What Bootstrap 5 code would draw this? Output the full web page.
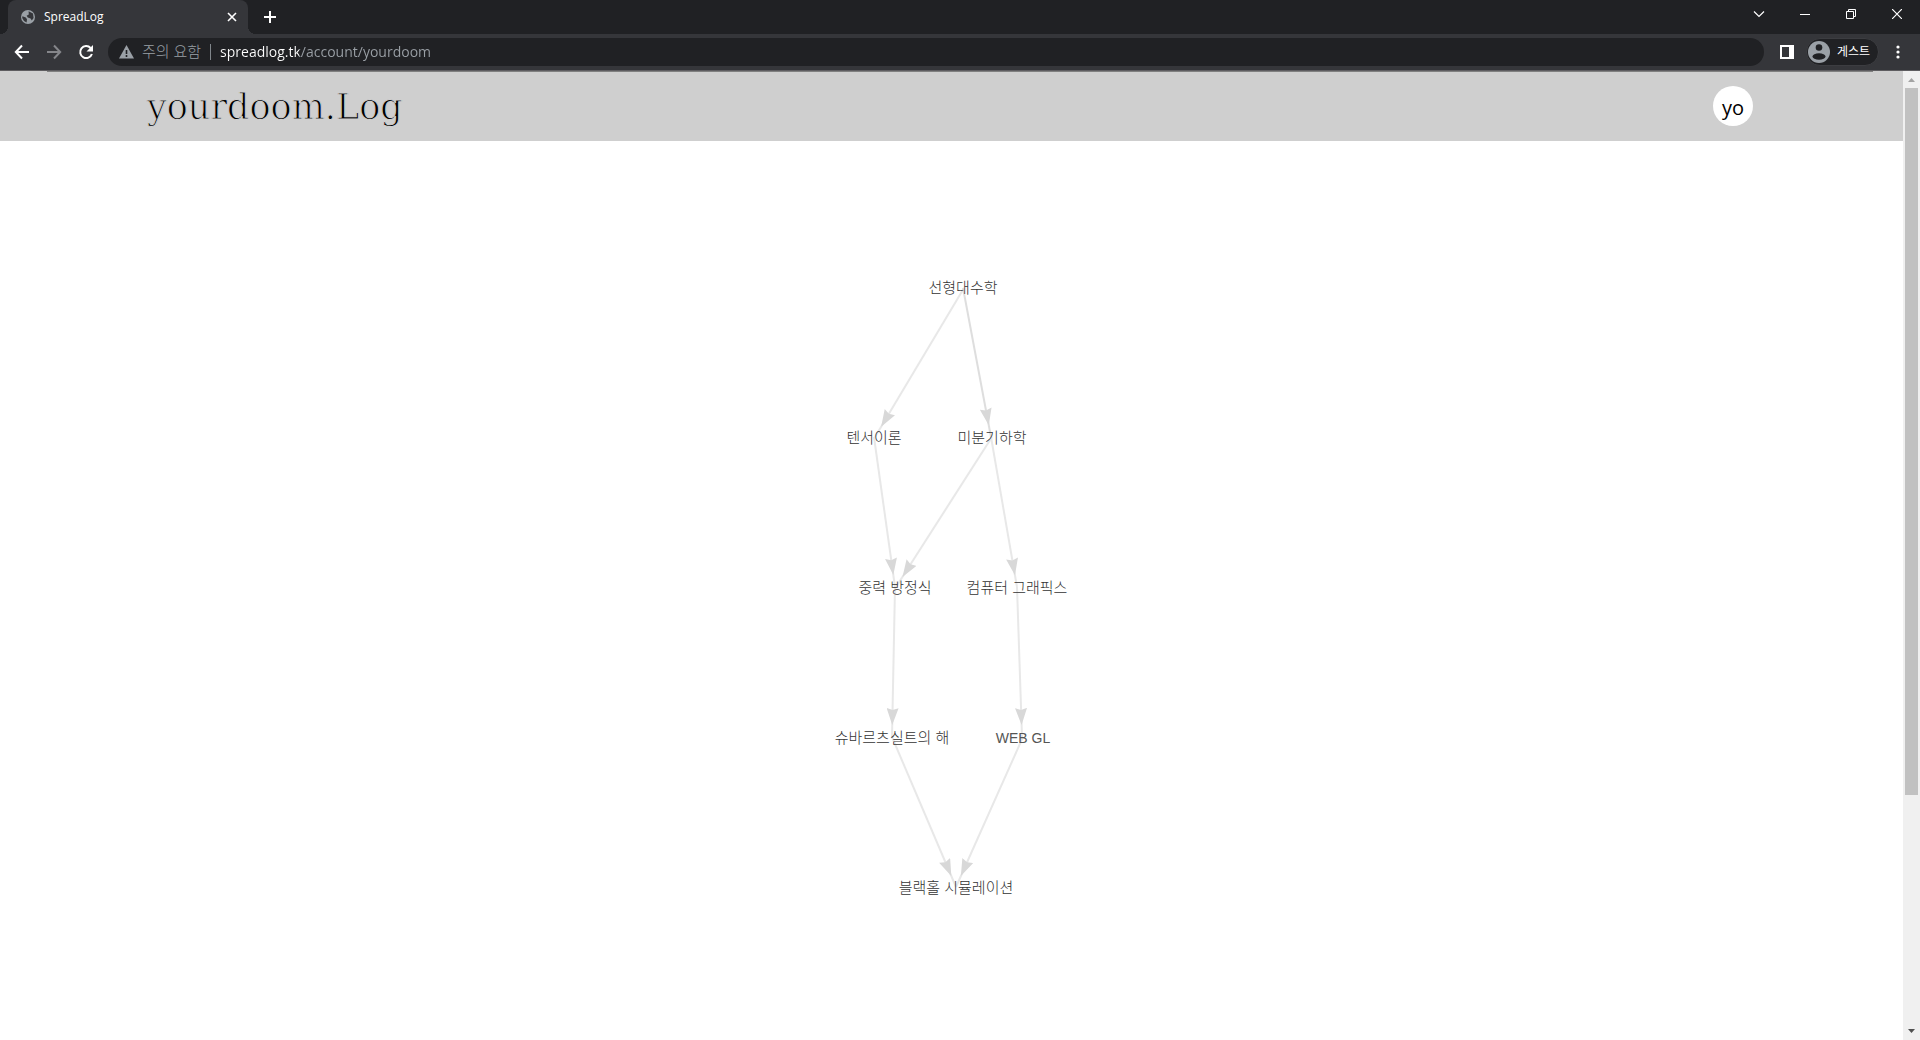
<!DOCTYPE html>
<html lang="ko">
<head>
<meta charset="utf-8">
<meta name="viewport" content="width=device-width, initial-scale=1">
<title>SpreadLog</title>
<link rel="stylesheet" href="https://cdn.jsdelivr.net/npm/bootstrap@5.3.0/dist/css/bootstrap.min.css">
<style>
  body { font-family: "Open Sans", "Noto Sans CJK KR", sans-serif; }
  button { background: none; border: 0; padding: 0; color: #fff; }
  svg { display: block; flex: none; }
  .tab-strip { height: 34px; background: #202124; padding-left: 8px; }
  .site-tab { width: 240px; background: #35363a; border-radius: 8px 8px 0 0; color: #fff; font-size: 12px; padding: 0 11px 0 12px; position: relative; }
  .site-tab::before, .site-tab::after { content: ""; position: absolute; bottom: 0; width: 8px; height: 8px; }
  .site-tab::before { left: -8px; background: radial-gradient(circle at 0 0, transparent 8px, #35363a 8px); }
  .site-tab::after { right: -8px; background: radial-gradient(circle at 100% 0, transparent 8px, #35363a 8px); }
  .site-tab a { color: #fff; text-decoration: none; }
  .caption-btn { width: 46px; height: 28px; display: grid; place-items: center; }
  .tool-bar { height: 36px; background: #35363a; padding: 0 20px 0 14px; }
  .nav-btns { gap: 16px; padding-right: 14px; }
  .omnibox { height: 28px; border-radius: 14px; background: #202124; padding: 0 11px; }
  .warn-label { color: #9aa0a6; font-size: 15px; font-weight: 300; line-height: 20px; margin-left: 8px; padding-bottom: 2px; }
  .divider { width: 1px; height: 16px; background: #80868b; margin: 0 9px; }
  .url-input { border: 0; outline: 0; padding: 0 0 2px; font-size: 14px; height: 24px; color: transparent; background: linear-gradient(90deg, #fff 79px, #9aa0a6 79px); -webkit-background-clip: text; background-clip: text; }
  .guest-btn { height: 28px; border-radius: 14px; background: #202124; border: 1px solid #3c3d41; font-size: 12px; padding: 0 8px 0 1px; gap: 7px; margin: 0 17px 0 12px; }
  .seam { height: 1px; background: #5e5d60; }
  .log-header { height: 70px; background: #cfcfcf; padding: 0 150px 0 147px; position: relative; }
  .log-header::before { content: ""; position: absolute; top: 0; left: 47px; right: 30px; height: 1px; background: #808080; }
  .log-title { font-family: "DejaVu Serif", serif; font-size: 35px; line-height: 40px; padding-top: 2px; color: #000; text-decoration: none; -webkit-text-stroke: 1px #cfcfcf; }
  .user-chip { width: 40px; height: 40px; border-radius: 50%; background: #fff; color: #000; font-size: 20px; line-height: 40px; padding-top: 2px; }
  .graph-area { padding-top: 129px; }
  .hangul { font: 300 15px "Liberation Sans", "Noto Sans CJK KR", sans-serif; }
  .latin { font: 14px "Liberation Sans", sans-serif; }
  .scroll-rail { width: 17px; background: #f0f0f0; }
  .scroll-thumb { width: 13px; height: 73%; background: #c1c1c1; }
  .rail-arrow { width: 17px; height: 17px; }
</style>
<script src="https://cdn.jsdelivr.net/npm/bootstrap@5.3.0/dist/js/bootstrap.bundle.min.js"></script>
</head>
<body class="vh-100 d-flex flex-column overflow-hidden">
<div class="tab-strip d-flex flex-shrink-0">
  <div class="site-tab d-flex align-items-center">
    <svg width="16" height="16" viewBox="0 0 16 16"><circle cx="8" cy="8" r="7" fill="#9aa0a6"/><path d="M2.400 7.200 5.800 8.600 7 10.200 6.600 13.400 4 12 2.200 9zM8.600 2.200 13 4.600 13.600 9 11.800 11.400 10.600 9.400 7.800 8.400 6.600 6.800 8.800 5.400z" fill="#35363a"/></svg>
    <a href="#" class="ms-2">SpreadLog</a>
    <button type="button" class="ms-auto" aria-label="Close tab"><svg width="10" height="10" viewBox="0 0 10 10"><path d="M1 1l8 8M9 1l-8 8" stroke="#fff" stroke-width="1.6"/></svg></button>
  </div>
  <button type="button" class="ms-3" aria-label="New tab"><svg width="12" height="12" viewBox="0 0 12 12"><path d="M6 0v12M0 6h12" stroke="#fff" stroke-width="2"/></svg></button>
  <div class="d-flex ms-auto">
    <button type="button" class="caption-btn" aria-label="Search tabs"><svg width="12" height="12" viewBox="0 0 12 12"><path d="M1 3.500l5 5 5-5" fill="none" stroke="#fff" stroke-width="1.200"/></svg></button>
    <button type="button" class="caption-btn" aria-label="Minimize"><svg width="10" height="10" viewBox="0 0 10 10"><path d="M0 5.500h10" stroke="#fff"/></svg></button>
    <button type="button" class="caption-btn" aria-label="Restore"><svg width="10" height="10" viewBox="0 0 10 10"><path d="M.5 2.500h7v7h-7zM2.500 2.500v-2h7v7h-2" fill="none" stroke="#fff"/></svg></button>
    <button type="button" class="caption-btn" aria-label="Close"><svg width="10" height="10" viewBox="0 0 10 10"><path d="M0 0l10 10M10 0L0 10" stroke="#fff" stroke-width="1.2"/></svg></button>
  </div>
</div>
<div class="tool-bar d-flex align-items-center flex-shrink-0">
  <div class="nav-btns d-flex">
    <button type="button" aria-label="Back"><svg width="16" height="16" viewBox="0 0 16 16"><path d="M15 8H2M8 1.500L1.800 8 8 14.500" fill="none" stroke="#fff" stroke-width="2"/></svg></button>
    <button type="button" aria-label="Forward"><svg width="16" height="16" viewBox="0 0 16 16"><path d="M1 8h13M8 1.500L14.200 8 8 14.500" fill="none" stroke="#85868a" stroke-width="2"/></svg></button>
    <button type="button" aria-label="Reload"><svg width="16" height="16" viewBox="0 0 16 16"><path d="M13.900 10A6 6 0 1 1 12.600 4" fill="none" stroke="#fff" stroke-width="2"/><path d="M15 1v6.500H8.500z" fill="#fff"/></svg></button>
  </div>
  <div class="omnibox d-flex align-items-center flex-grow-1">
    <svg width="15" height="14" viewBox="0 0 15 14"><path d="M7.500 0L15 13.500H0z" fill="#9aa0a6"/><path d="M7.500 5v4M7.500 10v2" stroke="#202124" stroke-width="1.600"/></svg>
    <label class="warn-label" for="address">주의 요함</label>
    <span class="divider"></span>
    <input id="address" class="url-input flex-grow-1" type="text" value="spreadlog.tk/account/yourdoom">
  </div>
  <button type="button" class="ms-3" aria-label="Side panel"><svg width="14" height="14" viewBox="0 0 14 14"><path d="M1 1h12v12H1z" fill="none" stroke="#fff" stroke-width="2"/><path d="M9 0h5v14H9z" fill="#fff"/></svg></button>
  <button type="button" class="guest-btn d-flex align-items-center">
    <svg width="22" height="22" viewBox="0 0 22 22"><circle cx="11" cy="11" r="11" fill="#9aa0a6"/><circle cx="11" cy="6.500" r="3.300" fill="#202124"/><ellipse cx="11" cy="15.500" rx="6.500" ry="3.300" fill="#202124"/></svg>
    <span>게스트</span>
  </button>
  <button type="button" aria-label="Menu"><svg width="4" height="14" viewBox="0 0 4 14"><g fill="#fff"><circle cx="2" cy="2" r="1.600"/><circle cx="2" cy="7" r="1.600"/><circle cx="2" cy="12" r="1.600"/></g></svg></button>
</div>
<div class="seam flex-shrink-0"></div>
<div class="d-flex flex-grow-1 overflow-hidden">
  <div class="flex-grow-1">
    <header class="log-header d-flex align-items-center justify-content-between">
      <a href="#" class="log-title">yourdoom.Log</a>
      <button type="button" class="user-chip">yo</button>
    </header>
    <main class="graph-area">
      <svg class="mx-auto" width="271" height="640" viewBox="816 270 271 640" role="img" aria-label="yourdoom.Log">
        <defs>
          <marker id="tip" viewBox="0 0 17 12" refX="29" refY="6" markerWidth="17" markerHeight="12" markerUnits="userSpaceOnUse" orient="auto"><path d="M0 0L17 6 0 12 2 6z" fill="#d8d8d8"/></marker>
        </defs>
        <g stroke="#e8e8e8" stroke-width="2">
          <path d="M964 288L875 437" marker-end="url(#tip)"/>
          <path d="M963 288L991 437" stroke="#dedede" marker-end="url(#tip)"/>
          <path d="M874 437L895 587" marker-end="url(#tip)"/>
          <path d="M992 437L896 587" marker-end="url(#tip)"/>
          <path d="M991 437L1017 587" marker-end="url(#tip)"/>
          <path d="M895 587L892 737" marker-end="url(#tip)"/>
          <path d="M1017 587L1022 737" marker-end="url(#tip)"/>
          <path d="M892 737L956 887" marker-end="url(#tip)"/>
          <path d="M1023 737L956 887" marker-end="url(#tip)"/>
        </g>
        <g class="hangul" fill="#333" text-anchor="middle">
          <text x="963" y="293">선형대수학</text>
          <text x="874" y="443">텐서이론</text>
          <text x="992" y="443">미분기하학</text>
          <text x="895" y="593">중력 방정식</text>
          <text x="1017" y="593">컴퓨터 그래픽스</text>
          <text x="892" y="743">슈바르츠실트의 해</text>
          <text x="1023" y="743" class="latin" fill="#555">WEB GL</text>
          <text x="956" y="893">블랙홀 시뮬레이션</text>
        </g>
      </svg>
    </main>
  </div>
  <div class="scroll-rail d-flex flex-column align-items-center flex-shrink-0">
    <svg class="rail-arrow" viewBox="0 0 17 17"><path d="M5 11l3.500-4 3.500 4z" fill="#a3a3a3"/></svg>
    <div class="scroll-thumb"></div>
    <svg class="rail-arrow mt-auto" viewBox="0 0 17 17"><path d="M5 6l3.500 4L12 6z" fill="#505050"/></svg>
  </div>
</div>
</body>
</html>
